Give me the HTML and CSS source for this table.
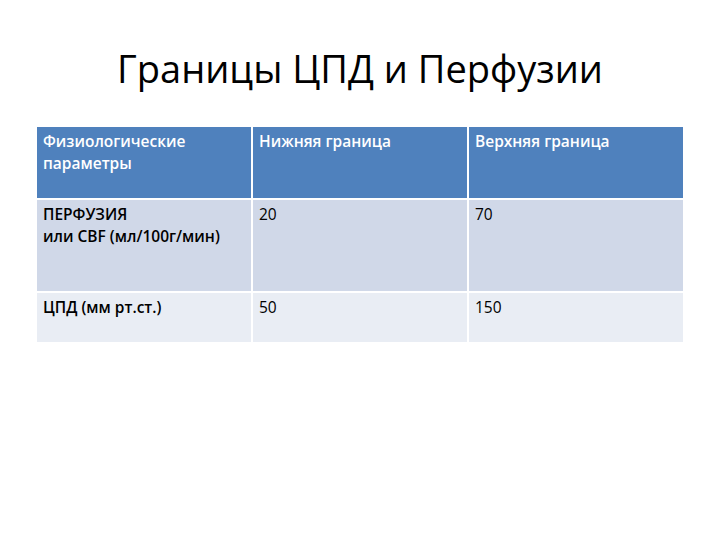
FILE: index.html
```html
<!DOCTYPE html>
<html lang="ru">
<head>
<meta charset="utf-8">
<link rel="stylesheet" href="styles.css">
</head>
<body>
<div class="slide">
  <h1 class="title">Границы ЦПД и Перфузии</h1>
  <table class="grid">
    <tr class="head">
      <td>Физиологические<br>параметры</td>
      <td>Нижняя граница</td>
      <td>Верхняя граница</td>
    </tr>
    <tr class="odd tall">
      <td class="first">ПЕРФУЗИЯ<br>или CBF (мл/100г/мин)</td>
      <td>20</td>
      <td>70</td>
    </tr>
    <tr class="even">
      <td class="first">ЦПД (мм рт.ст.)</td>
      <td>50</td>
      <td>150</td>
    </tr>
  </table>
</div>
</body>
</html>
```

FILE: styles.css
```css
html, body {
  margin: 0;
  padding: 0;
  background: #ffffff;
}
.slide {
  width: 720px;
  height: 540px;
  padding-top: 40px;
  box-sizing: border-box;
  font-family: "Open Sans", "Liberation Sans", sans-serif;
}
.title {
  margin: 0 0 29px 0;
  text-align: center;
  font-weight: 400;
  font-size: 38px;
  line-height: 56px;
  color: #000;
}
.grid {
  margin-left: 35px;
  width: 650px;
  border-collapse: collapse;
  table-layout: fixed;
}
.grid td {
  vertical-align: top;
  padding: 3px 6px 0 6px;
  font-size: 15.5px;
  line-height: 22px;
  color: #000;
  border: 2px solid #ffffff;
}
.head td {
  background: #4f81bd;
  color: #ffffff;
  height: 68px;
  font-weight: 600;
}
.odd td { background: #d0d8e8; }
.even td { background: #e9edf4; }
.tall td { height: 88px; }
.even td { height: 46px; }
.first { font-weight: 600; }
```
